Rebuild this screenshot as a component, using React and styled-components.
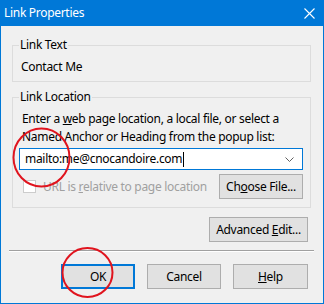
import React from "react";
import styled, { createGlobalStyle } from "styled-components";

const Global = createGlobalStyle`
  html, body { margin: 0; padding: 0; background: #f0f0f0; }
  body { font-family: "Noto Sans", "Open Sans", sans-serif; }
`;

const FONT = `"Noto Sans", "Open Sans", sans-serif`;

const Window = styled.div`
  position: relative;
  width: 324px;
  height: 304px;
  box-sizing: border-box;
  border: 1px solid #0078d7;
  border-top: none;
  background: #f0f0f0;
  font-family: ${FONT};
  font-size: 12px;
  letter-spacing: -0.3px;
  color: #000;
  display: flex;
  flex-direction: column;
  overflow: hidden;
`;

const TitleBar = styled.div`
  height: 26px;
  background: #0078d7;
  color: #fff;
  display: flex;
  align-items: center;
  padding: 0 9px 0 4px;
  margin: 0 -1px;
`;

const Title = styled.span`
  flex: 1;
  font-size: 12px;
  line-height: 16px;
`;

const Body = styled.div`
  padding: 11px 12px 0 11px;
  display: flex;
  flex-direction: column;
`;

const Group = styled.fieldset`
  margin: ${(p) => (p.$spaced ? "7px" : "0")} 0 0 0;
  padding: ${(p) => p.$pad};
  border: 1px solid #dcdcdc;
  min-width: 0;
`;

const Legend = styled.legend`
  padding: 0 1px;
  line-height: 16px;
`;

const Value = styled.div`
  line-height: 16px;
  padding-left: 2px;
`;

const Hint = styled.div`
  line-height: 18px;
  padding-left: 3px;
`;

const Combo = styled.div`
  margin-top: 2px;
  height: 22px;
  box-sizing: border-box;
  border: 1px solid #0078d7;
  background: #fff;
  display: flex;
  align-items: center;
  padding: 0 8px 0 5px;
`;

const Caret = styled.span`
  display: inline-block;
  width: 1px;
  height: 15px;
  background: #000;
  vertical-align: middle;
  margin-left: 1px;
`;

const ComboText = styled.span`
  flex: 1;
  line-height: 16px;
`;

const OptionsRow = styled.div`
  margin-top: 4px;
  display: flex;
  align-items: center;
`;

const CheckLabel = styled.label`
  flex: 1;
  display: flex;
  align-items: center;
  gap: 7px;
  padding-left: 4px;
  color: #a0a0a0;
  line-height: 16px;
`;

const CheckBox = styled.span`
  width: 13px;
  height: 13px;
  box-sizing: border-box;
  border: 1px solid #cccccc;
  background: #fff;
`;

const Button = styled.button`
  width: ${(p) => p.$w}px;
  height: 25px;
  box-sizing: border-box;
  padding: 0;
  background: #e1e1e1;
  border: 1px solid ${(p) => (p.$default ? "#0078d7" : "#adadad")};
  box-shadow: ${(p) => (p.$default ? "inset 0 0 0 1px #0078d7" : "none")};
  font-family: ${FONT};
  font-size: 12px;
  letter-spacing: -0.3px;
  color: #000;
  line-height: 16px;
  text-align: center;
`;

const AdvancedRow = styled.div`
  margin-top: 9px;
  display: flex;
  justify-content: flex-end;
  padding-right: 3px;
`;

const Separator = styled.div`
  margin: 8px -3px 0 -3px;
  height: 0;
  border-top: 1px solid #a0a0a0;
  border-bottom: 1px solid #ffffff;
`;

const Footer = styled.div`
  margin-top: 12px;
  display: flex;
  justify-content: flex-end;
  gap: 12px;
  padding-right: 3px;
`;

const Overlay = styled.svg`
  position: absolute;
  left: -1px;
  top: 0;
  pointer-events: none;
`;

const Chevron = () => (
  <svg width="9" height="5" viewBox="0 0 9 5">
    <polyline points="0.5,0.5 4.5,4.5 8.5,0.5" fill="none" stroke="#606060" strokeWidth="1" />
  </svg>
);

const CloseIcon = () => (
  <svg width="11" height="11" viewBox="0 0 11 11">
    <path d="M0.5 0.5 L10.5 10.5 M10.5 0.5 L0.5 10.5" stroke="#fff" strokeWidth="1.1" />
  </svg>
);

export default function App() {
  return (
    <>
      <Global />
      <Window>
        <TitleBar>
          <Title>Link Properties</Title>
          <CloseIcon />
        </TitleBar>
        <Body>
          <Group $pad="6px 7px 6px 6px">
            <Legend>Link Text</Legend>
            <Value>Contact Me</Value>
          </Group>
          <Group $spaced $pad="5px 7px 8px 6px">
            <Legend>Link Location</Legend>
            <Hint>
              Enter a <u>w</u>eb page location, a local file, or select a
              <br />
              Named Anchor or Heading from the popup list:
            </Hint>
            <Combo>
              <ComboText>
                mailto:me@cnocandoire.com
                <Caret />
              </ComboText>
              <Chevron />
            </Combo>
            <OptionsRow>
              <CheckLabel>
                <CheckBox />
                <span>
                  URL is <u>r</u>elative to page location
                </span>
              </CheckLabel>
              <Button $w={84}>
                Ch<u>o</u>ose File...
              </Button>
            </OptionsRow>
          </Group>
          <AdvancedRow>
            <Button $w={99}>
              Advanced <u>E</u>dit...
            </Button>
          </AdvancedRow>
          <Separator />
          <Footer>
            <Button $w={74} $default>
              OK
            </Button>
            <Button $w={74}>Cancel</Button>
            <Button $w={75}>
              <u>H</u>elp
            </Button>
          </Footer>
        </Body>
        <Overlay width="324" height="304" viewBox="0 0 324 304">
          <ellipse cx="41.5" cy="157.5" rx="28" ry="29" fill="none" stroke="#e0141e" strokeWidth="2" />
          <ellipse cx="87.5" cy="272.5" rx="25" ry="24.5" fill="none" stroke="#e0141e" strokeWidth="2" />
        </Overlay>
      </Window>
    </>
  );
}
